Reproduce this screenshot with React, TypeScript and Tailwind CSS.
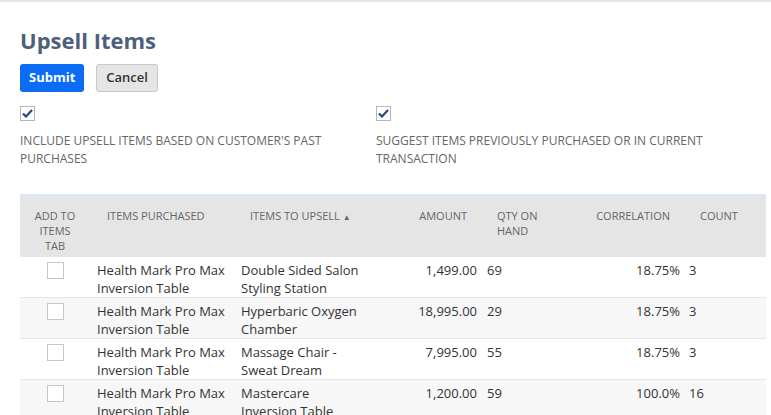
import React from "react";

const rows = [
  { purchased: "Health Mark Pro Max Inversion Table", upsell: "Double Sided Salon Styling Station", amount: "1,499.00", qty: "69", corr: "18.75%", count: "3" },
  { purchased: "Health Mark Pro Max Inversion Table", upsell: "Hyperbaric Oxygen Chamber", amount: "18,995.00", qty: "29", corr: "18.75%", count: "3" },
  { purchased: "Health Mark Pro Max Inversion Table", upsell: "Massage Chair - Sweat Dream", amount: "7,995.00", qty: "55", corr: "18.75%", count: "3" },
  { purchased: "Health Mark Pro Max Inversion Table", upsell: "Mastercare Inversion Table", amount: "1,200.00", qty: "59", corr: "100.0%", count: "16" },
];

const Check = () => (
  <div className="w-[15px] h-[15px] border border-[#b5b5b5] bg-white flex items-center justify-center">
    <svg width="11" height="9" viewBox="0 0 11 9">
      <path d="M1 4.5 L4 7.5 L10 1" stroke="#24497f" strokeWidth="2.2" fill="none" />
    </svg>
  </div>
);

export default function App() {
  return (
    <div className="w-[771px] h-[415px] overflow-hidden bg-white border-t-2 border-[#e6e6e6]" style={{ fontFamily: '"Open Sans", sans-serif' }}>
      <div className="pl-[20px]">
        <h1 className="pt-[23px] text-[22px] leading-[30px] font-bold text-[#4d5f79]">Upsell Items</h1>
        <div className="flex gap-3 mt-[9px]">
          <button className="h-[28px] px-[9px] rounded-[3px] bg-[#0b6cf5] text-white text-[13px] font-bold">Submit</button>
          <button className="h-[28px] px-[9px] rounded-[3px] bg-[#e5e5e5] border border-[#c8c8c8] text-[#333] text-[13px] font-semibold">Cancel</button>
        </div>
        <div className="flex mt-[14px] text-[12px] leading-[18px] text-[#666]">
          <div className="w-[356px]">
            <Check />
            <div className="mt-[11px] w-[320px]">INCLUDE UPSELL ITEMS BASED ON CUSTOMER'S PAST PURCHASES</div>
          </div>
          <div>
            <Check />
            <div className="mt-[11px] w-[340px]">SUGGEST ITEMS PREVIOUSLY PURCHASED OR IN CURRENT TRANSACTION</div>
          </div>
        </div>
        <div className="mt-[26px] w-[746px] border-t-[5px] border-[#e0e6ef]">
          <div className="flex h-[58px] bg-[#e5e5e5] text-[11px] leading-[15px] text-[#666] pt-[9px]">
            <div className="w-[70px] text-center px-[12px]">ADD TO ITEMS TAB</div>
            <div className="w-[144px] pl-[17px]">ITEMS PURCHASED</div>
            <div className="w-[166px] pl-[16px]">ITEMS TO UPSELL <span className="text-[8px]">▲</span></div>
            <div className="w-[82px] pr-[15px] text-right">AMOUNT</div>
            <div className="w-[98px] pl-[15px] pr-[40px]">QTY ON HAND</div>
            <div className="w-[104px] pr-[14px] text-right">CORRELATION</div>
            <div className="flex-1 pl-[16px]">COUNT</div>
          </div>
          {rows.map((r, i) => (
            <div key={i} className={`flex h-[41px] text-[13px] leading-[18px] text-[#333] pt-[4px] border-b border-[#e5e5e5] ${i % 2 === 1 ? "bg-[#f7f7f7]" : "bg-white"}`}>
              <div className="w-[70px] flex justify-center pt-[1px]">
                <div className="w-[17px] h-[17px] border border-[#c6c6c6] bg-white" />
              </div>
              <div className="w-[144px] pl-[7px]">{r.purchased}</div>
              <div className="w-[166px] pl-[7px] pr-[40px]">{r.upsell}</div>
              <div className="w-[82px] pr-[5px] text-right">{r.amount}</div>
              <div className="w-[98px] pl-[5px]">{r.qty}</div>
              <div className="w-[104px] pr-[4px] text-right">{r.corr}</div>
              <div className="flex-1 pl-[5px]">{r.count}</div>
            </div>
          ))}
        </div>
      </div>
    </div>
  );
}
